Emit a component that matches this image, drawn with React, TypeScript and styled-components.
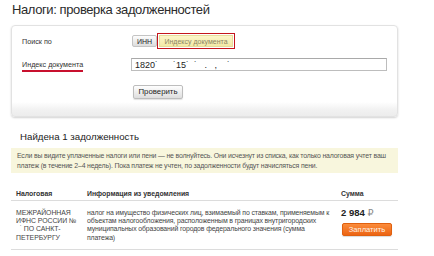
import React from "react";
import styled, { createGlobalStyle } from "styled-components";

const Global = createGlobalStyle`
  html, body { margin: 0; padding: 0; background: #fff; }
  body { font-family: "Liberation Sans", Arial, sans-serif; color: #333; }
`;

const Page = styled.div`
  width: 387px;
  margin-left: 11px;
  display: flex;
  flex-direction: column;
`;

const Title = styled.h1`
  margin: 0 0 0 1px;
  font-size: 13px;
  letter-spacing: -0.4px;
  font-weight: normal;
  line-height: 20px;
  color: #2b2b2b;
  white-space: nowrap;
`;

const Panel = styled.div`
  margin-top: 5px;
  height: 92px;
  box-sizing: border-box;
  border: 1px solid #e2e2e2;
  border-radius: 4px;
  box-shadow: 0 1px 2px rgba(0, 0, 0, 0.18);
  background: linear-gradient(to bottom, #fff 0, #fff 76px, #f1f1f1 84px, #ececec 100%);
  padding: 7px 10px 0;
  display: grid;
  grid-template-columns: 109px 1fr;
  grid-auto-rows: auto;
  align-content: start;
  align-items: center;
  row-gap: 8px;
`;

const Label = styled.div<{ $underline?: boolean }>`
  font-size: 7.2px;
  color: #333;
  line-height: 9px;
  white-space: nowrap;
  span {
    display: inline-block;
    padding-bottom: 1px;
    border-bottom: ${(p) => (p.$underline ? "2px solid #c8102e" : "none")};
    margin-top: ${(p) => (p.$underline ? "3px" : "0")};
  }
`;

const Toggle = styled.div`
  display: flex;
  align-items: center;
  margin-left: 1px;
  height: 16px;
`;

const ToggleBtn = styled.button<{ $active?: boolean }>`
  font-family: inherit;
  font-size: 7px;
  line-height: 9px;
  padding: 0;
  box-sizing: border-box;
  white-space: nowrap;
  cursor: pointer;
  ${(p) =>
    p.$active
      ? `
    width: 78px; height: 16px;
    border: 1px solid #c4161c;
    padding: 1px;
    background: #fff;
    color: #8d8562;
    & > span {
      display: flex; align-items: center; justify-content: center;
      height: 100%;
      background: linear-gradient(to bottom, #fbf6c9, #f3e9a6);
      border: 1px solid #e6dc9a;
      box-sizing: border-box;
    }
  `
      : `
    width: 25px; height: 12px;
    border: 1px solid #c4c4c4;
    border-radius: 2px;
    background: linear-gradient(to bottom, #fdfdfd, #dcdcdc);
    color: #222;
    & > span { display: block; }
  `}
`;

const Input = styled.input`
  width: 256px;
  height: 13px;
  box-sizing: border-box;
  border: 1px solid #bdbdbd;
  border-top-color: #a9a9a9;
  padding: 0 3px;
  font-family: inherit;
  font-size: 9px;
  color: #222;
  outline: none;
  white-space: pre;
`;

const CheckBtn = styled.button`
  margin-left: 2px;
  margin-top: 1px;
  width: 50px;
  height: 14px;
  padding: 0;
  box-sizing: border-box;
  font-family: inherit;
  font-size: 7.8px;
  color: #222;
  border: 1px solid #bdbdbd;
  border-radius: 2px;
  background: linear-gradient(to bottom, #fefefe, #dedede);
  box-shadow: 0 1px 1px rgba(0, 0, 0, 0.12);
`;

const Heading = styled.h2`
  margin: 14px 0 0 9px;
  font-size: 9.7px;
  font-weight: normal;
  line-height: 12px;
  color: #222;
  white-space: nowrap;
`;

const Note = styled.div`
  margin-top: 5px;
  background: #f8f6dd;
  padding: 3px 6px 2px;
  font-size: 6.9px;
  letter-spacing: -0.16px;
  line-height: 10px;
  color: #555;
  height: 25px;
  box-sizing: border-box;
  white-space: nowrap;
`;

const Table = styled.table`
  margin-top: 16px;
  width: 100%;
  border-collapse: collapse;
  table-layout: fixed;
  font-size: 6.9px;
  letter-spacing: -0.12px;
  color: #444;
`;

const Th = styled.th<{ $w?: number }>`
  text-align: left;
  font-weight: bold;
  font-size: 6.9px;
  letter-spacing: 0;
  color: #333;
  padding: 0 5px 0;
  height: 11px;
  line-height: 10px;
  vertical-align: top;
  border-bottom: 1px solid #dcdcdc;
  width: ${(p) => (p.$w ? `${p.$w}px` : "auto")};
  box-sizing: border-box;
  white-space: nowrap;
`;

const Td = styled.td`
  vertical-align: top;
  padding: 8px 5px 7px;
  line-height: 8.4px;
  border-bottom: 1px solid #dcdcdc;
`;

const OrgCell = styled(Td)`
  font-size: 6.9px;
  letter-spacing: -0.05px;
  color: #444;
  padding-right: 2px;
  white-space: nowrap;
`;

const Amount = styled.div`
  font-weight: bold;
  font-size: 9.5px;
  line-height: 12px;
  letter-spacing: 0;
  color: #222;
  margin-top: -2px;
  white-space: nowrap;
  span {
    font-family: "DejaVu Sans", sans-serif;
    font-weight: normal;
    color: #888;
    font-size: 9.5px;
  }
`;

const PayBtn = styled.button`
  margin-top: 4px;
  margin-left: 1px;
  width: 50px;
  height: 13px;
  padding: 0;
  border: 1px solid #e0600f;
  border-radius: 2px;
  background: linear-gradient(to bottom, #fb8c3b, #ec6413);
  color: #fff3e6;
  font-family: inherit;
  font-size: 7.6px;
  letter-spacing: 0;
  white-space: nowrap;
  box-shadow: 0 1px 1px rgba(0, 0, 0, 0.15);
`;

export default function App() {
  return (
    <>
      <Global />
      <Page>
        <Title>Налоги: проверка задолженностей</Title>
        <Panel>
          <Label>Поиск по</Label>
          <Toggle>
            <ToggleBtn>
              <span>ИНН</span>
            </ToggleBtn>
            <ToggleBtn $active>
              <span>Индексу документа</span>
            </ToggleBtn>
          </Toggle>
          <Label $underline>
            <span>Индекс документа</span>
          </Label>
          <Input readOnly value={"1820˙      ˙15˙  ˙   .   ,    ˙"} />
          <div />
          <div>
            <CheckBtn>Проверить</CheckBtn>
          </div>
        </Panel>
        <Heading>Найдена 1 задолженность</Heading>
        <Note>
          Если вы видите уплаченные налоги или пени — не волнуйтесь. Они исчезнут из списка, как только налоговая учтет ваш
          <br />
          платеж (в течение 2–4 недель). Пока платеж не учтен, по задолженности будут начисляться пени.
        </Note>
        <Table>
          <thead>
            <tr>
              <Th $w={71}>Налоговая</Th>
              <Th $w={254}>Информация из уведомления</Th>
              <Th>Сумма</Th>
            </tr>
          </thead>
          <tbody>
            <tr>
              <OrgCell>
                МЕЖРАЙОННАЯ
                <br />
                ИФНС РОССИИ №
                <br />
                &nbsp;&nbsp;˙ ПО САНКТ-
                <br />
                ПЕТЕРБУРГУ
              </OrgCell>
              <Td>
                налог на имущество физических лиц, взимаемый по ставкам, применяемым к объектам налогообложения,
                расположенным в границах внутригородских муниципальных образований городов федерального значения (сумма
                платежа)
              </Td>
              <Td>
                <Amount>
                  2 984 <span>₽</span>
                </Amount>
                <PayBtn>Заплатить</PayBtn>
              </Td>
            </tr>
          </tbody>
        </Table>
      </Page>
    </>
  );
}
